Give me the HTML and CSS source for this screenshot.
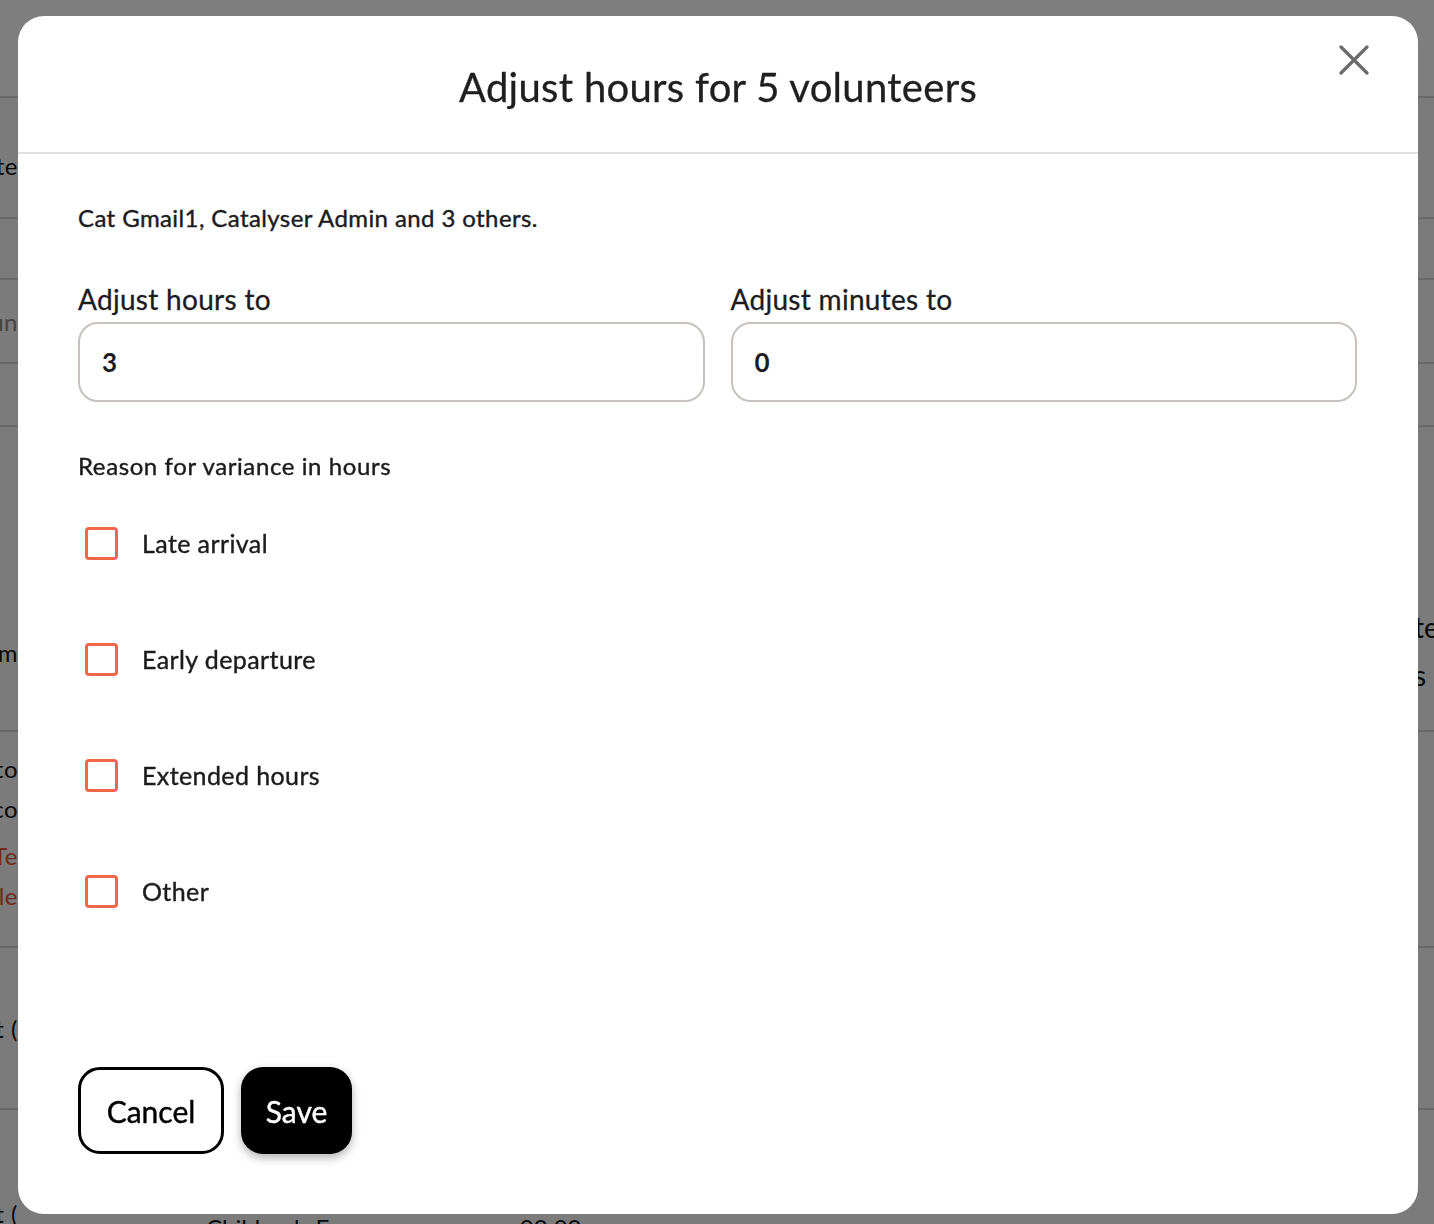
FILE: index.html
```html
<!DOCTYPE html>
<html lang="en">
<head>
    <meta charset="UTF-8">
    <meta name="viewport" content="width=device-width, initial-scale=1.0">
    <title>Adjust hours</title>
    <link rel="stylesheet" href="styles.css">
</head>
<body>
    <!-- roster page underneath the dialog -->
    <div class="page">
        <div class="page-top"></div>
        <div class="page-row row-a"><div class="lead"><span>Roste</span></div></div>
        <div class="page-row row-b"></div>
        <div class="page-row row-c"><div class="lead muted"><span>Sun</span></div></div>
        <div class="page-row row-d"></div>
        <div class="page-row row-e">
            <div class="lead"><span>Farm</span></div>
            <div class="tail">
                <span>te</span>
                <span>s</span>
            </div>
        </div>
        <div class="page-row row-f">
            <div class="lead stack">
                <span>Pato</span>
                <span>Paco</span>
                <span class="warn gap">Te</span>
                <span class="warn">le</span>
            </div>
        </div>
        <div class="page-row row-g"><div class="lead"><span>t (</span></div></div>
        <div class="page-row row-h">
            <div class="lead"><span>t (</span></div>
            <div class="row-cells">
                <span class="cell-name">Children's Farm</span>
                <span class="cell-time">09:00pm</span>
            </div>
        </div>
    </div>

    <div class="overlay"></div>

    <div class="modal">
        <div class="modal-header">
            <h2 class="modal-title">Adjust hours for 5 volunteers</h2>
            <button class="modal-close" aria-label="Close">
                <svg width="30" height="30" viewBox="0 0 30 30">
                    <path d="M2 2 L28 28 M28 2 L2 28" stroke="#6b6b6b" stroke-width="3.2" stroke-linecap="round"/>
                </svg>
            </button>
        </div>

        <div class="modal-body">
            <p class="intro">Cat Gmail1, Catalyser Admin and 3 others.</p>

            <div class="field-grid">
                <label class="field">
                    <span class="field-label">Adjust hours to</span>
                    <input class="field-input" type="text" value="3">
                </label>
                <label class="field">
                    <span class="field-label">Adjust minutes to</span>
                    <input class="field-input" type="text" value="0">
                </label>
            </div>

            <p class="reason-title">Reason for variance in hours</p>

            <div class="reason-list">
                <label class="reason"><span class="check"></span>Late arrival</label>
                <label class="reason"><span class="check"></span>Early departure</label>
                <label class="reason"><span class="check"></span>Extended hours</label>
                <label class="reason"><span class="check"></span>Other</label>
            </div>
        </div>

        <div class="modal-footer">
            <button class="btn btn-outline">Cancel</button>
            <button class="btn btn-dark">Save</button>
        </div>
    </div>
</body>
</html>
```

FILE: styles.css
```css
* {
    margin: 0;
    padding: 0;
    box-sizing: border-box;
}

body {
    font-family: Lato, 'Noto Sans', Arial, sans-serif;
    color: #1c1c1f;
    background: #fff;
    height: 1224px;
    overflow: hidden;
}

/* page behind the dialog */
.page {
    font-size: 24px;
    color: #111;
}

.page-top {
    height: 96px;
    background: #fff;
}

.page-row {
    display: flex;
    justify-content: space-between;
    border-top: 2px solid #d2d2d2;
    background: #f6f6f6;
}

.row-a { height: 121px; align-items: center; padding-top: 16px; }
.row-b { height: 61px; }
.row-c { height: 84px; align-items: center; }
.row-d { height: 63px; }
.row-e { height: 305px; align-items: flex-end; padding-bottom: 63px; }
.row-f { height: 216px; align-items: flex-start; padding-top: 17px; }
.row-g { height: 162px; align-items: center; }
.row-h { height: 120px; align-items: flex-end; }

.lead {
    width: 18px;
    display: flex;
    justify-content: flex-end;
    white-space: nowrap;
    letter-spacing: 0.5px;
}

.lead.stack {
    flex-direction: column;
    align-items: flex-end;
    line-height: 40px;
}

.lead.muted { color: #8a8a8a; }

.warn { color: #e4553b; }

.gap { margin-top: 7px; }

.tail {
    align-self: flex-start;
    margin-top: 176px;
    width: 20px;
    display: flex;
    flex-direction: column;
    line-height: 48px;
    white-space: nowrap;
    font-size: 28px;
}

.row-cells {
    flex: 1;
    display: flex;
    gap: 152px;
    padding-left: 188px;
    margin-bottom: -14px;
}

/* dim layer + dialog */
.overlay {
    position: fixed;
    inset: 0;
    background: rgba(0, 0, 0, 0.5);
}

.modal {
    position: fixed;
    top: 16px;
    left: 18px;
    width: 1400px;
    height: 1198px;
    background: #fff;
    border-radius: 26px;
    display: flex;
    flex-direction: column;
}

.modal-header {
    height: 138px;
    border-bottom: 2px solid #e0e0e0;
    display: flex;
    align-items: center;
    justify-content: center;
    position: relative;
    padding-top: 6px;
}

.modal-title {
    font-size: 40px;
    font-weight: 400;
    letter-spacing: 0.3px;
    color: #1f1f1f;
    -webkit-text-stroke: 0.3px #1f1f1f;
}

.modal-close {
    position: absolute;
    top: 29px;
    right: 49px;
    border: none;
    background: none;
    width: 30px;
    height: 30px;
    cursor: pointer;
}

.modal-body {
    flex: 1;
    padding: 49px 61px 0 60px;
}

.intro {
    font-size: 24px;
    line-height: 30px;
    letter-spacing: 0.4px;
    -webkit-text-stroke: 0.4px #1c1c1f;
}

.field-grid {
    display: grid;
    grid-template-columns: 1fr 1fr;
    gap: 26px;
    margin-top: 50px;
}

.field {
    display: flex;
    flex-direction: column;
    gap: 7px;
}

.field-label {
    font-size: 28px;
    line-height: 32px;
    letter-spacing: 0.3px;
    -webkit-text-stroke: 0.3px #1c1c1f;
}

.field-input {
    height: 80px;
    border: 2px solid #c7c2bf;
    border-radius: 20px;
    padding: 0 22px;
    font-family: inherit;
    font-size: 26px;
    font-weight: 700;
    color: #1c1c1f;
    outline: none;
}

.reason-title {
    margin-top: 49px;
    font-size: 24px;
    line-height: 30px;
    letter-spacing: 0.6px;
    -webkit-text-stroke: 0.4px #1c1c1f;
}

.reason-list {
    display: flex;
    flex-direction: column;
    gap: 68px;
    margin-top: 38px;
}

.reason {
    display: flex;
    align-items: center;
    gap: 24px;
    height: 48px;
    padding-left: 7px;
    font-size: 25px;
    letter-spacing: 0.4px;
    -webkit-text-stroke: 0.4px #1c1c1f;
}

.check {
    width: 33px;
    height: 33px;
    border: 3px solid #f0674a;
    border-radius: 4px;
}

.modal-footer {
    display: flex;
    gap: 17px;
    padding: 0 60px 60px;
}

.btn {
    height: 87px;
    border-radius: 22px;
    font-family: inherit;
    font-size: 30px;
    cursor: pointer;
    -webkit-text-stroke: 0.4px currentColor;
}

.btn-outline {
    width: 146px;
    background: #fff;
    border: 3px solid #000;
    color: #000;
}

.btn-dark {
    width: 111px;
    background: #000;
    border: none;
    color: #fff;
    box-shadow: 0 4px 10px rgba(0, 0, 0, 0.3);
}
```
